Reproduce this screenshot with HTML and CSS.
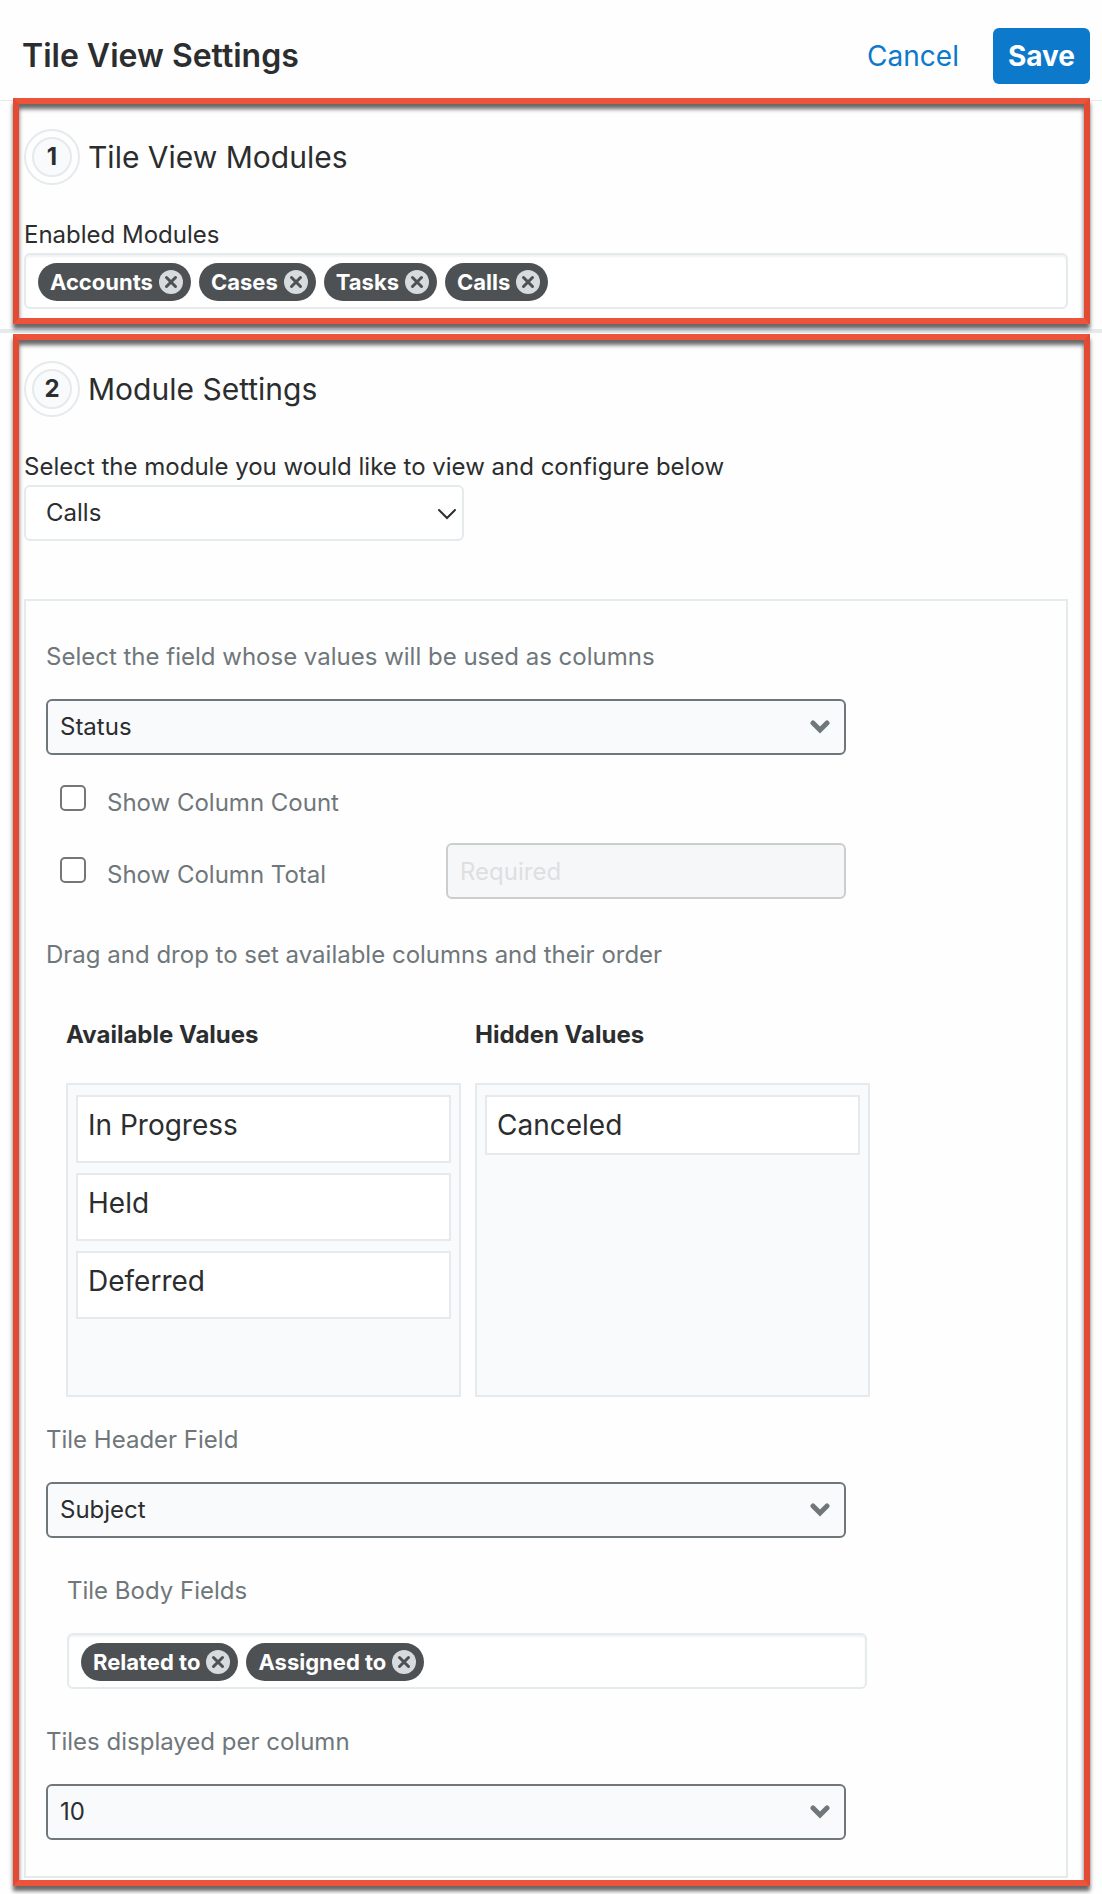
FILE: index.html
```html
<!DOCTYPE html>
<html lang="en">
<head>
<meta charset="utf-8">
<meta name="viewport" content="width=device-width, initial-scale=1">
<title>Tile View Settings</title>
<link rel="stylesheet" href="styles.css">
</head>
<body>
<svg class="sprite" aria-hidden="true">
  <symbol id="chevron-bold" viewBox="0 0 20 14"><path d="M3 3l7 7 7-7" fill="none" stroke="currentColor" stroke-width="5" stroke-linecap="round"/></symbol>
  <symbol id="chevron-thin" viewBox="0 0 20 14"><path d="M2 4l8 8 8-8" fill="none" stroke="currentColor" stroke-width="2" stroke-linecap="round"/></symbol>
  <symbol id="remove" viewBox="0 0 24 24"><circle cx="12" cy="12" r="12" fill="#d7dbde"/><path d="M7.500 7.500l9 9M16.500 7.500l-9 9" stroke="#4d5154" stroke-width="3" stroke-linecap="round"/></symbol>
</svg>

<header class="topbar">
  <h1 class="topbar-title">Tile View Settings</h1>
  <a class="cancel" href="#">Cancel</a>
  <button class="save" type="button">Save</button>
</header>

<main>
  <section class="step step-modules">
    <h2 class="step-title"><span class="badge"><span class="badge-num">1</span></span>Tile View Modules</h2>
    <div class="label" id="modules-label">Enabled Modules</div>
    <div class="chips" role="group" aria-labelledby="modules-label">
      <span class="chip">Accounts<button class="chip-x" type="button" aria-label="Remove Accounts"><svg><use href="#remove"/></svg></button></span>
      <span class="chip">Cases<button class="chip-x" type="button" aria-label="Remove Cases"><svg><use href="#remove"/></svg></button></span>
      <span class="chip">Tasks<button class="chip-x" type="button" aria-label="Remove Tasks"><svg><use href="#remove"/></svg></button></span>
      <span class="chip">Calls<button class="chip-x" type="button" aria-label="Remove Calls"><svg><use href="#remove"/></svg></button></span>
    </div>
  </section>

  <section class="step step-settings">
    <h2 class="step-title"><span class="badge"><span class="badge-num">2</span></span>Module Settings</h2>
    <label class="label" for="module">Select the module you would like to view and configure below</label>
    <div class="select select-module">
      <select id="module"><option>Calls</option></select>
      <svg class="select-arrow"><use href="#chevron-thin"/></svg>
    </div>

    <form class="panel">
      <div class="field">
        <label class="label" for="columns">Select the field whose values will be used as columns</label>
        <div class="select">
          <select id="columns"><option>Status</option></select>
          <svg class="select-arrow"><use href="#chevron-bold"/></svg>
        </div>
      </div>

      <div class="checks">
        <div class="check">
          <input class="check-box" type="checkbox" id="count">
          <label class="check-label" for="count">Show Column Count</label>
        </div>
        <div class="check">
          <input class="check-box" type="checkbox" id="total">
          <label class="check-label" for="total">Show Column Total</label>
        </div>
        <input class="total-field" type="text" placeholder="Required" aria-label="Column total field" disabled>
      </div>

      <p class="hint">Drag and drop to set available columns and their order</p>

      <div class="lists">
        <div class="list-col">
          <h3 class="list-title">Available Values</h3>
          <ul class="list">
            <li class="item">In Progress</li>
            <li class="item">Held</li>
            <li class="item">Deferred</li>
          </ul>
        </div>
        <div class="list-col">
          <h3 class="list-title">Hidden Values</h3>
          <ul class="list">
            <li class="item item-hidden">Canceled</li>
          </ul>
        </div>
      </div>

      <div class="field">
        <label class="label" for="header-field">Tile Header Field</label>
        <div class="select">
          <select id="header-field"><option>Subject</option></select>
          <svg class="select-arrow"><use href="#chevron-bold"/></svg>
        </div>
      </div>

      <div class="field field-body">
        <div class="label" id="body-label">Tile Body Fields</div>
        <div class="chips" role="group" aria-labelledby="body-label">
          <span class="chip">Related to<button class="chip-x" type="button" aria-label="Remove Related to"><svg><use href="#remove"/></svg></button></span>
          <span class="chip">Assigned to<button class="chip-x" type="button" aria-label="Remove Assigned to"><svg><use href="#remove"/></svg></button></span>
        </div>
      </div>

      <div class="field">
        <label class="label" for="per-column">Tiles displayed per column</label>
        <div class="select">
          <select id="per-column"><option>10</option></select>
          <svg class="select-arrow"><use href="#chevron-bold"/></svg>
        </div>
      </div>
    </form>
  </section>
</main>
</body>
</html>
```
FILE: styles.css
```css
* { box-sizing: border-box; margin: 0; padding: 0; }

body {
  font: 24px/32px Inter, "Liberation Sans", sans-serif;
  color: #2b2d2e;
  background: #fefefe;
}

button, input, select { font: inherit; color: inherit; }

.sprite { display: none; }

.topbar {
  display: flex;
  align-items: center;
  padding: 28px 12px 16px 22px;
  border-bottom: 1px solid #e5eaed;
}
.topbar-title { flex: 1; font-size: 32px; font-weight: 600; line-height: 56px; }
.cancel { margin-right: 34px; font-size: 28px; color: #0c79ca; text-decoration: none; }
.save {
  height: 56px;
  padding: 0 15px;
  border: 0;
  border-radius: 6px;
  background: #0c79ca;
  color: #fff;
  font-size: 28px;
  font-weight: 700;
}

.step { position: relative; padding: 28px 34px 20px 24px; }
.step-modules { border-bottom: 4px solid #e5eaed; }
.step-settings { padding-bottom: 16px; }

/* Highlight frame drawn over each step */
.step::after {
  content: "";
  position: absolute;
  inset: -3px 12px 5px 13px;
  border: 6px solid #e24a33;
  border-color: #ed523b #e24a33;
  box-shadow: 0 5px 4px rgba(0, 0, 0, .6), inset 0 5px 4px rgba(0, 0, 0, .6);
  pointer-events: none;
}
.step-settings::after { inset: 1px 12px 8px 13px; }

.step-title {
  display: flex;
  align-items: center;
  gap: 8px;
  margin-bottom: 34px;
  font-size: 30px;
  font-weight: 400;
}
.badge { padding: 6px; border: 2px solid #e5eaed; border-radius: 50%; }
.badge-num {
  display: block;
  width: 40px;
  border: 2px solid #e5eaed;
  border-radius: 50%;
  background: #f9fafc;
  font-size: 24px;
  font-weight: 700;
  line-height: 36px;
  text-align: center;
}

.label { display: block; margin-bottom: 2px; }

.chips {
  display: flex;
  flex-wrap: wrap;
  gap: 8px;
  padding: 8px 12px 6px;
  border: 2px solid #e5eaed;
  border-radius: 6px;
  background: #fff;
  box-shadow: inset 0 2px 2px #f0f2f4;
}
.chip {
  display: flex;
  align-items: center;
  gap: 6px;
  padding: 0 8px 0 12px;
  border-radius: 20px;
  background: #4d5154;
  color: #fff;
  font-size: 22px;
  font-weight: 700;
  line-height: 38px;
}
.chip-x { width: 24px; height: 24px; border: 0; background: none; }
.chip-x svg { display: block; width: 24px; height: 24px; }

.select { display: grid; align-items: center; }
.select select {
  grid-area: 1 / 1;
  appearance: none;
  width: 100%;
  height: 56px;
  padding: 0 48px 0 12px;
  border: 2px solid #6f777b;
  border-radius: 6px;
  background: #f9fafc;
}
.select-arrow {
  grid-area: 1 / 1;
  justify-self: end;
  width: 20px;
  height: 14px;
  margin-right: 16px;
  color: #6f777b;
  pointer-events: none;
}
.select-module { width: 440px; max-width: 100%; }
.select-module select { padding-left: 20px; border-color: #e5eaed; background: #fff; }
.select-module .select-arrow { margin-right: 7px; color: #2b2d2e; }

.panel { margin-top: 58px; padding: 40px 20px 36px; border: 2px solid #e5eaed; }
.field { width: 80%; margin-bottom: 37px; }
.field:last-child { margin-bottom: 0; }
.field .label { margin-bottom: 26px; color: #6f777b; }
.field-body { margin-left: 21px; }

.checks {
  display: grid;
  grid-template-columns: 1fr 1fr;
  gap: 16px 0;
  width: 80%;
  margin-top: -21px;
}
.check { grid-column: 1; display: flex; align-items: center; gap: 21px; height: 56px; padding-left: 14px; }
.check-box {
  appearance: none;
  width: 26px;
  height: 26px;
  margin-bottom: 2px;
  border: 2px solid #767676;
  border-radius: 5px;
  background: #fff;
}
.check-label { padding-top: 8px; color: #6f777b; }
.total-field {
  grid-column: 2;
  width: 100%;
  height: 56px;
  padding: 0 12px;
  border: 2px solid #cbcecf;
  border-radius: 6px;
  background: #f6f7f9;
}
.total-field::placeholder { color: #dddfe1; opacity: 1; }

.hint { margin: 40px 0 48px; color: #6f777b; }

.lists { display: grid; grid-template-columns: 1fr 1fr; gap: 14px; width: calc(80% + 4px); margin: 0 0 27px 20px; }
.list-col { display: flex; flex-direction: column; }
.list-title { margin-bottom: 32px; font-size: 24px; font-weight: 700; }
.list {
  flex: 1;
  min-height: 314px;
  padding: 10px 8px;
  border: 2px solid #e5eaed;
  background: #f9fafc;
  list-style: none;
}
.item {
  min-height: 68px;
  margin-bottom: 10px;
  padding: 12px 10px;
  border: 2px solid #e5eaed;
  background: #fff;
  font-size: 28px;
}
.item-hidden { min-height: 60px; }
```
